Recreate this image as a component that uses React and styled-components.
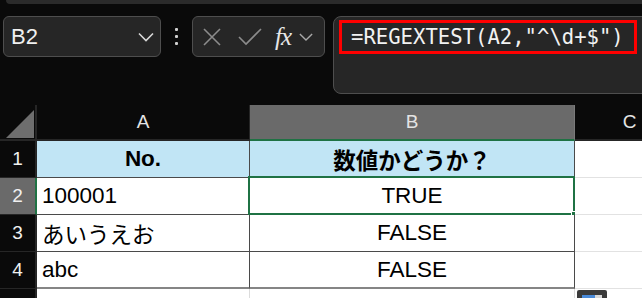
import styled, { createGlobalStyle } from "styled-components";

const GlobalStyle = createGlobalStyle`
  html, body {
    margin: 0;
    padding: 0;
    background: #0a0a0a;
  }
  body {
    font-family: "Liberation Sans", "Noto Sans CJK JP", sans-serif;
  }
`;

const rows = [
  { n: 1, a: "No.", b: "数値かどうか？", head: true },
  { n: 2, a: "100001", b: "TRUE" },
  { n: 3, a: "あいうえお", b: "FALSE" },
  { n: 4, a: "abc", b: "FALSE", last: true },
];

const App = () => {
  return (
    <Page>
      <GlobalStyle />
      <Ribbon />
      <FormulaRow>
        <NameBox>
          <NameText>B2</NameText>
          <Chevron />
        </NameBox>
        <Dots>
          <Dot />
          <Dot />
          <Dot />
        </Dots>
        <FxBox>
          <svg width="20" height="20" viewBox="0 0 20 20">
            <path d="M2 2 L18 18 M18 2 L2 18" stroke="#8c8c8c" strokeWidth="1.6" fill="none" />
          </svg>
          <svg width="24" height="20" viewBox="0 0 24 20">
            <path d="M1 10 L8 17 L23 2" stroke="#8c8c8c" strokeWidth="1.6" fill="none" />
          </svg>
          <FxText>fx</FxText>
          <Chevron small />
        </FxBox>
        <FormulaBox>
          <Highlight>=REGEXTEST(A2,"^\d+$")</Highlight>
        </FormulaBox>
      </FormulaRow>

      <Sheet>
        <Corner>
          <svg width="32" height="32" viewBox="0 0 32 32">
            <polygon points="3,31 31,31 31,3" fill="#6e6e6e" />
          </svg>
        </Corner>
        <ColHeader>A</ColHeader>
        <ColHeader $active>B</ColHeader>
        <ColHeader>C</ColHeader>

        {rows.map((r) => (
          <Row key={r.n} r={r} />
        ))}

        <RowHeader />
        <Cell $plain />
        <Cell $plain />
        <Cell $outside />
        <QuickButton>
          <svg width="30" height="14" viewBox="0 0 30 14">
            <rect x="0" y="0" width="30" height="14" rx="2" fill="#3a3a3a" />
            <rect x="5" y="5" width="13" height="9" fill="#4a8ad8" />
            <rect x="18" y="5" width="7" height="9" fill="#d8d8d8" />
          </svg>
        </QuickButton>
      </Sheet>
    </Page>
  );
};

const Row = ({ r }) => (
  <>
    <RowHeader $active={r.n === 2}>{r.n}</RowHeader>
    <Cell $head={r.head} $last={r.last}>
      {r.a}
    </Cell>
    <Cell $head={r.head} $last={r.last} $center>
      {r.b}
      {r.n === 2 && (
        <>
          <ActiveFrame />
          <FillHandle />
        </>
      )}
    </Cell>
    <Cell $outside />
  </>
);

const Chevron = ({ small }) => (
  <ChevronIcon width={small ? 14 : 16} height="10" viewBox="0 0 16 10">
    <path d="M1 1.5 L8 8.5 L15 1.5" stroke={small ? "#a8a8a8" : "#d8d8d8"} strokeWidth="1.6" fill="none" />
  </ChevronIcon>
);

const Page = styled.div`
  width: 642px;
  height: 298px;
  overflow: hidden;
  background: #0a0a0a;
`;

const Ribbon = styled.div`
  height: 4px;
  margin-left: 6px;
  background: #2b2b2b;
  border-bottom-left-radius: 6px;
`;

const FormulaRow = styled.div`
  display: flex;
  align-items: flex-start;
  margin-top: 12px;
  padding-left: 3px;
  height: 78px;
  & > * {
    flex-shrink: 0;
  }
`;

const NameBox = styled.div`
  box-sizing: border-box;
  width: 158px;
  height: 41px;
  display: flex;
  align-items: center;
  justify-content: space-between;
  padding: 0 6px 0 7px;
  background: #262626;
  border: 1px solid #4e4e4e;
  border-radius: 6px;
`;

const NameText = styled.span`
  font-size: 22px;
  color: #f0f0f0;
`;

const ChevronIcon = styled.svg`
  flex-shrink: 0;
  margin-top: 1px;
`;

const Dots = styled.div`
  width: 31px;
  height: 41px;
  display: flex;
  flex-direction: column;
  align-items: center;
  justify-content: center;
  gap: 4px;
`;

const Dot = styled.span`
  width: 3px;
  height: 3px;
  background: #d0d0d0;
  border-radius: 1px;
`;

const FxBox = styled.div`
  box-sizing: border-box;
  width: 133px;
  height: 41px;
  display: flex;
  align-items: center;
  gap: 14px;
  padding: 0 4px 0 9px;
  background: #262626;
  border: 1px solid #4e4e4e;
  border-radius: 6px;
  & > svg:nth-child(2) {
    margin-left: 2px;
  }
`;

const FxText = styled.span`
  font-family: "Liberation Serif", "DejaVu Serif", serif;
  font-style: italic;
  font-size: 25px;
  color: #e6e6e6;
  margin-left: -1px;
  margin-right: -6px;
  letter-spacing: -1px;
`;

const FormulaBox = styled.div`
  box-sizing: border-box;
  width: 330px;
  height: 78px;
  margin-left: 8px;
  padding: 3px 5px;
  background: #262626;
  border: 1px solid #4e4e4e;
  border-radius: 8px;
`;

const Highlight = styled.div`
  box-sizing: border-box;
  width: 298px;
  height: 34px;
  padding: 0 9px;
  border: 3px solid #ff0000;
  font-family: "DejaVu Sans Mono", monospace;
  font-size: 20.6px;
  line-height: 28px;
  color: #f2f2f2;
  white-space: nowrap;
`;

const Sheet = styled.div`
  position: relative;
  margin-top: 11px;
  display: grid;
  grid-template-columns: 37px 213px 325px 110px;
  grid-template-rows: 36px repeat(4, 37px) 37px;
  width: 685px;
`;

const Corner = styled.div`
  box-sizing: border-box;
  border-right: 2px solid #262626;
  border-bottom: 2px solid #262626;
  display: flex;
  align-items: flex-end;
  justify-content: flex-end;
  overflow: hidden;
`;

const ColHeader = styled.div`
  box-sizing: border-box;
  display: flex;
  align-items: center;
  justify-content: center;
  font-size: 19px;
  color: #e4e4e4;
  background: ${(p) => (p.$active ? "#6a6a6a" : "#0a0a0a")};
  border-right: 1px solid ${(p) => (p.$active ? "#7a7a7a" : "#262626")};
  border-bottom: 2px solid ${(p) => (p.$active ? "#1f7244" : "#262626")};
`;

const RowHeader = styled.div`
  box-sizing: border-box;
  display: flex;
  align-items: center;
  justify-content: center;
  font-size: 19px;
  color: #f0f0f0;
  background: ${(p) => (p.$active ? "#6a6a6a" : "#0a0a0a")};
  border-right: ${(p) => (p.$active ? "2px solid #1f7244" : "2px solid #262626")};
  border-bottom: 1px solid #262626;
`;

const Cell = styled.div`
  box-sizing: border-box;
  position: relative;
  display: flex;
  align-items: center;
  justify-content: ${(p) => (p.$center || p.$head ? "center" : "flex-start")};
  padding-left: ${(p) => (p.$center || p.$head ? "0" : "5px")};
  font-size: 22.5px;
  font-weight: ${(p) => (p.$head ? "bold" : "normal")};
  color: #000;
  white-space: nowrap;
  background: ${(p) => (p.$head ? "#c1e5f5" : "#ffffff")};
  border-right: 1px solid ${(p) => (p.$outside || p.$plain ? "#dcdcdc" : "#4a4a4a")};
  border-bottom: ${(p) =>
    p.$outside || p.$plain
      ? "1px solid #e2e2e2"
      : p.$last
      ? "2px solid #858585"
      : "1px solid #4a4a4a"};
`;

const ActiveFrame = styled.div`
  position: absolute;
  top: -2px;
  left: -2px;
  right: -1px;
  bottom: -1px;
  border: 2px solid #1f7244;
  pointer-events: none;
`;

const FillHandle = styled.div`
  position: absolute;
  right: -5px;
  bottom: -5px;
  width: 6px;
  height: 6px;
  background: #1f7244;
  border: 1px solid #ffffff;
`;

const QuickButton = styled.div`
  position: absolute;
  left: 577px;
  top: 185px;
  line-height: 0;
`;

export default App;
